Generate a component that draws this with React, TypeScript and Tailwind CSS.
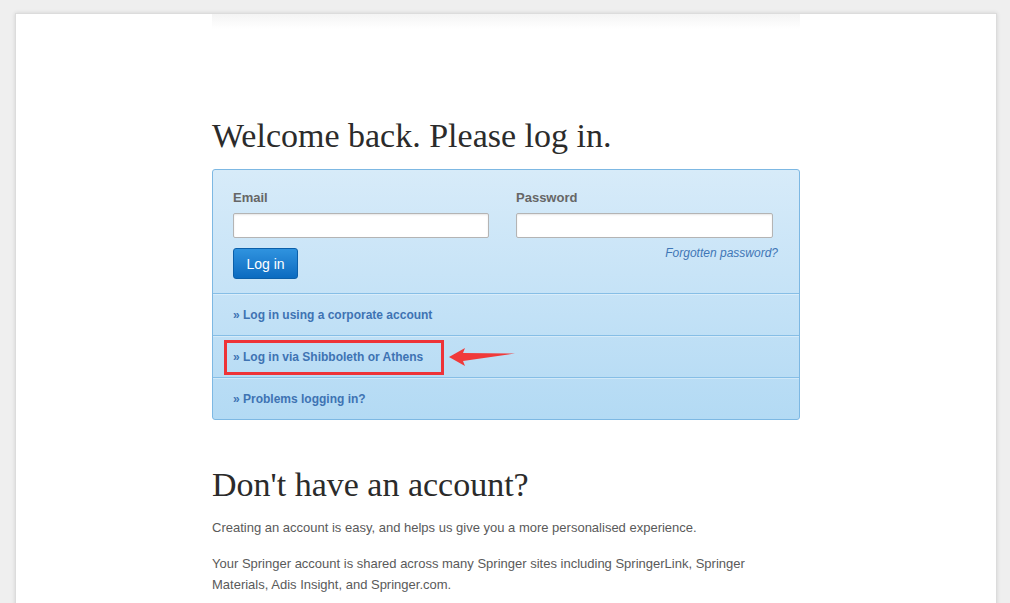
const LoginPage = () => {
  return (
    <main className="min-h-screen bg-[#efefef] pt-[13px] overflow-hidden font-['Liberation_Sans',Arial,sans-serif]">
      <div className="ml-[15px] w-[982px] min-h-[640px] bg-white border border-[#dcdcdc] shadow-[0_0_4px_rgba(0,0,0,0.12)]">
        <div className="w-[588px] mx-auto">
          <div className="h-[15px] bg-gradient-to-b from-[#f4f4f4] to-white" />

          <h1 className="mt-[87px] text-[34px] leading-[40px] text-[#2b2b2b] font-['Liberation_Serif',Georgia,serif]">
            Welcome back. Please log in.
          </h1>

          <div className="relative mt-[13px] border border-[#7db8e3] rounded-[3px] bg-gradient-to-b from-[#d7ebf9] to-[#b3daf4]">
            <div className="px-5 pt-5 pb-[14px]">
              <div className="grid grid-cols-[256px_262px] gap-x-[27px]">
                <div>
                  <label className="block text-[13px] leading-4 font-bold text-[#666]">Email</label>
                  <div className="mt-[7px] h-[25px] w-[256px] bg-white border border-[#b4b4b4] rounded-[2px] shadow-[inset_0_1px_2px_rgba(0,0,0,0.1)]" />
                  <button className="mt-[10px] h-[31px] w-[65px] rounded-[3px] border border-[#0b5fa9] bg-gradient-to-b from-[#2f93df] to-[#0a6bc0] text-white text-[14px] leading-none">
                    Log in
                  </button>
                </div>
                <div>
                  <label className="block text-[13px] leading-4 font-bold text-[#666]">Password</label>
                  <div className="mt-[7px] h-[25px] w-[257px] bg-white border border-[#b4b4b4] rounded-[2px] shadow-[inset_0_1px_2px_rgba(0,0,0,0.1)]" />
                  <p className="mt-2 text-right text-[12px] leading-[14px] italic text-[#3f76b6]">Forgotten password?</p>
                </div>
              </div>
            </div>

            {["Log in using a corporate account", "Log in via Shibboleth or Athens", "Problems logging in?"].map((t) => (
              <div
                key={t}
                className="h-[42px] px-5 flex items-center border-t border-[#86bee6] shadow-[inset_0_1px_0_rgba(255,255,255,0.35)] text-[12px] font-bold text-[#3e73b3]"
              >
                » {t}
              </div>
            ))}

            {/* annotation */}
            <div className="absolute left-[11px] top-[170px] w-[220px] h-[35px] border-[3px] border-[#ee3338]" />
            <svg className="absolute left-[234px] top-[176px]" width="70" height="22" viewBox="0 0 70 22">
              <polygon points="2,11 18,2 16,7 68,7.5 16,15 18,20" fill="#f03a3a" />
            </svg>
          </div>

          <h2 className="mt-[45px] text-[34px] leading-[40px] text-[#2b2b2b] font-['Liberation_Serif',Georgia,serif]">
            Don't have an account?
          </h2>
          <p className="mt-[12px] text-[13px] leading-[21px] text-[#5a5a5a]">
            Creating an account is easy, and helps us give you a more personalised experience.
          </p>
          <p className="mt-[15px] text-[13px] leading-[21px] text-[#5a5a5a]">
            Your Springer account is shared across many Springer sites including SpringerLink, Springer Materials, Adis
            Insight, and Springer.com.
          </p>
        </div>
      </div>
    </main>
  );
};
export default LoginPage;
